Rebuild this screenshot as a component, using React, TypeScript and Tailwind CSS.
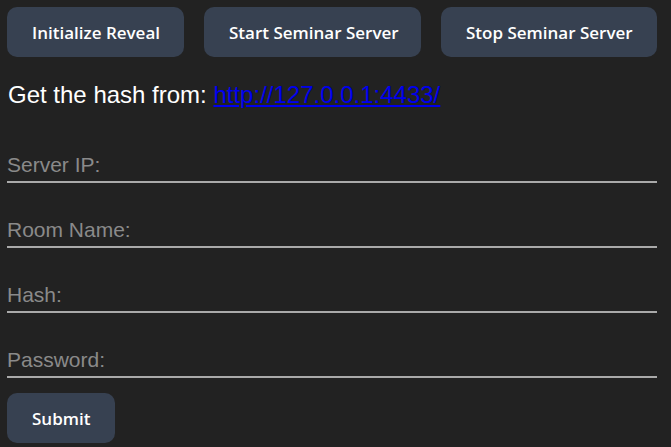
import React from "react";

const btn =
  "h-[50px] px-[25px] rounded-[10px] bg-[#374151] text-white font-semibold text-[17px] whitespace-nowrap shrink-0 [font-family:'Open_Sans',sans-serif] leading-none";

const inputCls =
  "block w-full h-[34px] bg-transparent border-0 border-b-2 border-[#aaaaaa] text-[21px] text-white placeholder:text-[#8a8a8a] [font-family:'Liberation_Sans',Arial,sans-serif] outline-none px-0";

export default function App() {
  return (
    <div className="min-h-[447px] w-full bg-[#222222] p-[7px] pr-[14px] [font-family:'Liberation_Sans',Arial,sans-serif]">
      <div className="flex gap-[20px]">
        <button className={btn + " w-[177px] px-0"}>Initialize Reveal</button>
        <button className={btn + " w-[217px] px-0"}>Start Seminar Server</button>
        <button className={btn + " w-[216px] px-0"}>Stop Seminar Server</button>
      </div>
      <p className="mt-[24px] text-[24px] text-white leading-[27px] pl-[1px]">
        Get the hash from:{" "}
        <a href="#" className="text-[#0000ee] underline">
          http://127.0.0.1:4433/
        </a>
      </p>
      <div className="mt-[41px] flex flex-col gap-[31px]">
        <input className={inputCls} placeholder="Server IP:" />
        <input className={inputCls} placeholder="Room Name:" />
        <input className={inputCls} placeholder="Hash:" />
        <input className={inputCls} placeholder="Password:" />
      </div>
      <button className={btn + " mt-[15px]"}>Submit</button>
    </div>
  );
}
